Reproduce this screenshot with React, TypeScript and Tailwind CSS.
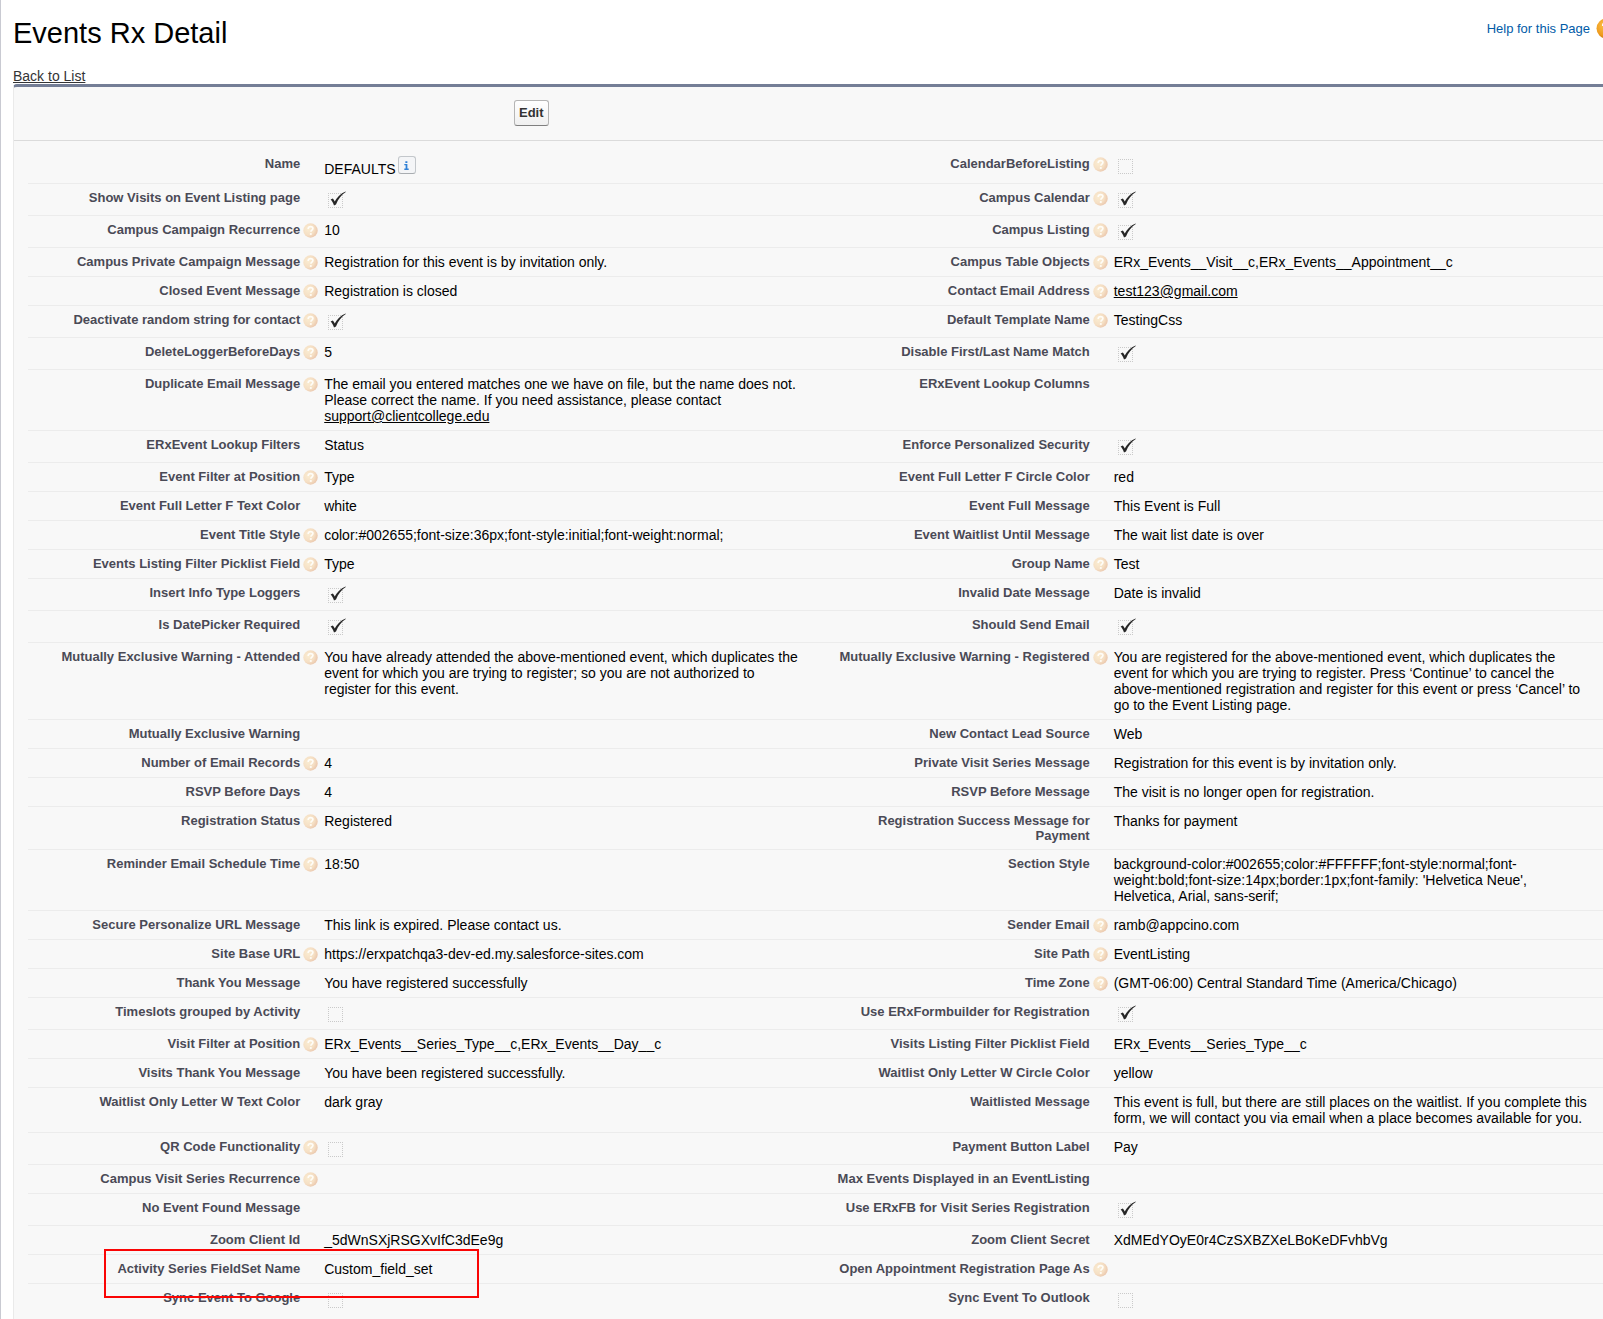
import React from 'react';
import clsx from 'clsx';

interface IField {
  label: string;
  help?: boolean;
  value?: React.ReactNode;
  checked?: boolean;
  marked?: boolean;
}

const linkClass = 'underline underline-offset-1';

const rows: [IField, IField][] = [
  [
    { label: 'Name', value: <NameValue /> },
    { label: 'CalendarBeforeListing', help: true, checked: false },
  ],
  [
    { label: 'Show Visits on Event Listing page', checked: true },
    { label: 'Campus Calendar', help: true, checked: true },
  ],
  [
    { label: 'Campus Campaign Recurrence', help: true, value: '10' },
    { label: 'Campus Listing', help: true, checked: true },
  ],
  [
    { label: 'Campus Private Campaign Message', help: true, value: 'Registration for this event is by invitation only.' },
    { label: 'Campus Table Objects', help: true, value: 'ERx_Events__Visit__c,ERx_Events__Appointment__c' },
  ],
  [
    { label: 'Closed Event Message', help: true, value: 'Registration is closed' },
    {
      label: 'Contact Email Address',
      help: true,
      value: <a href="mailto:test123@gmail.com" className={linkClass}>test123@gmail.com</a>,
    },
  ],
  [
    { label: 'Deactivate random string for contact', help: true, checked: true },
    { label: 'Default Template Name', help: true, value: 'TestingCss' },
  ],
  [
    { label: 'DeleteLoggerBeforeDays', help: true, value: '5' },
    { label: 'Disable First/Last Name Match', checked: true },
  ],
  [
    {
      label: 'Duplicate Email Message',
      help: true,
      value: (
        <>
          The email you entered matches one we have on file, but the name does not. Please correct the name. If you
          need assistance, please contact{' '}
          <a href="mailto:support@clientcollege.edu" className={linkClass}>support@clientcollege.edu</a>
        </>
      ),
    },
    { label: 'ERxEvent Lookup Columns' },
  ],
  [
    { label: 'ERxEvent Lookup Filters', value: 'Status' },
    { label: 'Enforce Personalized Security', checked: true },
  ],
  [
    { label: 'Event Filter at Position', help: true, value: 'Type' },
    { label: 'Event Full Letter F Circle Color', value: 'red' },
  ],
  [
    { label: 'Event Full Letter F Text Color', value: 'white' },
    { label: 'Event Full Message', value: 'This Event is Full' },
  ],
  [
    { label: 'Event Title Style', help: true, value: 'color:#002655;font-size:36px;font-style:initial;font-weight:normal;' },
    { label: 'Event Waitlist Until Message', value: 'The wait list date is over' },
  ],
  [
    { label: 'Events Listing Filter Picklist Field', help: true, value: 'Type' },
    { label: 'Group Name', help: true, value: 'Test' },
  ],
  [
    { label: 'Insert Info Type Loggers', checked: true },
    { label: 'Invalid Date Message', value: 'Date is invalid' },
  ],
  [
    { label: 'Is DatePicker Required', checked: true },
    { label: 'Should Send Email', checked: true },
  ],
  [
    {
      label: 'Mutually Exclusive Warning - Attended',
      help: true,
      value:
        'You have already attended the above-mentioned event, which duplicates the event for which you are trying to register; so you are not authorized to register for this event.',
    },
    {
      label: 'Mutually Exclusive Warning - Registered',
      help: true,
      value:
        'You are registered for the above-mentioned event, which duplicates the event for which you are trying to register. Press ‘Continue’ to cancel the above-mentioned registration and register for this event or press ‘Cancel’ to go to the Event Listing page.',
    },
  ],
  [
    { label: 'Mutually Exclusive Warning' },
    { label: 'New Contact Lead Source', value: 'Web' },
  ],
  [
    { label: 'Number of Email Records', help: true, value: '4' },
    { label: 'Private Visit Series Message', value: 'Registration for this event is by invitation only.' },
  ],
  [
    { label: 'RSVP Before Days', value: '4' },
    { label: 'RSVP Before Message', value: 'The visit is no longer open for registration.' },
  ],
  [
    { label: 'Registration Status', help: true, value: 'Registered' },
    { label: 'Registration Success Message for Payment', value: 'Thanks for payment' },
  ],
  [
    { label: 'Reminder Email Schedule Time', help: true, value: '18:50' },
    {
      label: 'Section Style',
      value:
        "background-color:#002655;color:#FFFFFF;font-style:normal;font-weight:bold;font-size:14px;border:1px;font-family: 'Helvetica Neue', Helvetica, Arial, sans-serif;",
    },
  ],
  [
    { label: 'Secure Personalize URL Message', value: 'This link is expired. Please contact us.' },
    { label: 'Sender Email', help: true, value: 'ramb@appcino.com' },
  ],
  [
    { label: 'Site Base URL', help: true, value: 'https://erxpatchqa3-dev-ed.my.salesforce-sites.com' },
    { label: 'Site Path', help: true, value: 'EventListing' },
  ],
  [
    { label: 'Thank You Message', value: 'You have registered successfully' },
    { label: 'Time Zone', help: true, value: '(GMT-06:00) Central Standard Time (America/Chicago)' },
  ],
  [
    { label: 'Timeslots grouped by Activity', checked: false },
    { label: 'Use ERxFormbuilder for Registration', checked: true },
  ],
  [
    { label: 'Visit Filter at Position', help: true, value: 'ERx_Events__Series_Type__c,ERx_Events__Day__c' },
    { label: 'Visits Listing Filter Picklist Field', value: 'ERx_Events__Series_Type__c' },
  ],
  [
    { label: 'Visits Thank You Message', value: 'You have been registered successfully.' },
    { label: 'Waitlist Only Letter W Circle Color', value: 'yellow' },
  ],
  [
    { label: 'Waitlist Only Letter W Text Color', value: 'dark gray' },
    {
      label: 'Waitlisted Message',
      value:
        'This event is full, but there are still places on the waitlist. If you complete this form, we will contact you via email when a place becomes available for you.',
    },
  ],
  [
    { label: 'QR Code Functionality', help: true, checked: false },
    { label: 'Payment Button Label', value: 'Pay' },
  ],
  [
    { label: 'Campus Visit Series Recurrence', help: true },
    { label: 'Max Events Displayed in an EventListing' },
  ],
  [
    { label: 'No Event Found Message' },
    { label: 'Use ERxFB for Visit Series Registration', checked: true },
  ],
  [
    { label: 'Zoom Client Id', value: '_5dWnSXjRSGXvIfC3dEe9g' },
    { label: 'Zoom Client Secret', value: 'XdMEdYOyE0r4CzSXBZXeLBoKeDFvhbVg' },
  ],
  [
    { label: 'Activity Series FieldSet Name', value: 'Custom_field_set', marked: true },
    { label: 'Open Appointment Registration Page As', help: true },
  ],
  [
    { label: 'Sync Event To Google', checked: false },
    { label: 'Sync Event To Outlook', checked: false },
  ],
];

function NameValue() {
  return (
    <span className="flex h-[21px] items-start">
      <span className="self-end">DEFAULTS</span>
      <button
        type="button"
        aria-label="Info"
        className="ml-[2px] flex size-[18px] items-center justify-center rounded-[3px] border border-[#c3c7cb] border-b-[#a9adb1] bg-[#f4f5f7]"
      >
        <svg viewBox="0 0 8 10" className="h-[9px] w-[7px]" fill="#2f80d6">
          <path d="M2.7 0h2.3v2H2.7zM1.5 3.2H5v5.3h1.5V10h-5V8.500h1.500V4.600H1.500z" />
        </svg>
      </button>
    </span>
  );
}

function HelpIcon() {
  return (
    <svg viewBox="0 0 15 15" className="size-[15px]" aria-hidden="true">
      <defs>
        <radialGradient id="helpFill" cx="0.35" cy="0.4" r="0.7">
          <stop offset="0" stopColor="#faecd2" />
          <stop offset="0.6" stopColor="#f5dfc4" />
          <stop offset="1" stopColor="#e9c4aa" />
        </radialGradient>
      </defs>
      <circle cx="7.500" cy="7.500" r="7.200" fill="url(#helpFill)" />
      <path
        d="M5.200 5.900c0-1.500 1-2.300 2.400-2.300s2.300.8 2.300 2c0 1.500-2 1.500-2 3.100"
        fill="none"
        stroke="#fffdf8"
        strokeWidth="1.700"
      />
      <circle cx="7.800" cy="11" r="1.100" fill="#fffdf8" />
    </svg>
  );
}

function CheckValue({ id, checked }: { id: string; checked: boolean }) {
  return (
    <span className="relative block h-[19px] w-6">
      <input
        id={id}
        type="checkbox"
        checked={checked}
        disabled
        className="absolute top-[3px] left-1 size-[15px] appearance-none border border-dotted border-[#cacaca]"
      />
      {checked && (
        <svg viewBox="0 0 16 16" className="absolute top-px left-[6px] size-4" aria-hidden="true">
          <path
            d="M.6 8.600 2.800 7.400C3.800 8.300 4.300 9.300 4.700 10.400 7 6 10.500 2.500 15.600.4L15.800 1.100C11.500 3.800 8.200 8.200 6 13.500L4 14.500C3.200 12.300 2.200 10.200.6 8.600z"
            fill="#262626"
          />
        </svg>
      )}
    </span>
  );
}

function FieldCells({ field, last }: { field: IField; last: boolean }) {
  const id = field.label.toLowerCase().replace(/\W+/g, '-');
  const isCheck = field.checked !== undefined;
  const border = !last && 'border-b border-[#ececec]';

  return (
    <>
      <th
        scope="row"
        className={clsx('relative py-[6px] pr-3 pl-1 text-right align-top text-[13px] leading-[15px] font-bold text-[#4a4a56]', border)}
      >
        {isCheck ? <label htmlFor={id}>{field.label}</label> : field.label}
        {field.help && (
          <span className="absolute top-[7px] right-[-6px]">
            <HelpIcon />
          </span>
        )}
        {field.marked && (
          <span className="pointer-events-none absolute -top-[6px] left-[76px] z-10 h-[49px] w-[375px] border-2 border-[#fa0505]" />
        )}
      </th>
      <td className={clsx('py-[6px] pr-4 pl-3 align-top text-sm leading-4 text-black', border)}>
        {isCheck ? <CheckValue id={id} checked={!!field.checked} /> : <div className="min-h-4">{field.value}</div>}
      </td>
    </>
  );
}

export default function App() {
  return (
    <div className="min-h-screen overflow-hidden border-l border-[#c9cad2] bg-white font-['Liberation_Sans',Arial,sans-serif]">
      {/* The detail block is a little wider than the window */}
      <div className="-mr-[18px] pl-3">
        <header className="flex items-start justify-between pt-[14px] pr-1">
          <h1 className="text-[29px] leading-[38px] text-black">Events Rx Detail</h1>
          <a href="#help" className="flex items-center gap-[6px] pt-1 text-[13px] leading-[21px] text-[#015ba7]">
            Help for this Page
            <svg viewBox="0 0 21 21" className="size-[21px]" aria-hidden="true">
              <defs>
                <radialGradient id="pageHelp" cx="0.4" cy="0.35" r="0.7">
                  <stop offset="0" stopColor="#fcc14a" />
                  <stop offset="0.7" stopColor="#ee9a1c" />
                  <stop offset="1" stopColor="#c86f10" />
                </radialGradient>
              </defs>
              <circle cx="10.500" cy="10.500" r="10" fill="url(#pageHelp)" />
              <path d="M7 8c0-2 1.500-3.200 3.600-3.200S14 6 14 7.700c0 2.200-3 2.200-3 4.600" fill="none" stroke="#fff" strokeWidth="2.200" />
              <circle cx="11" cy="15.500" r="1.400" fill="#fff" />
            </svg>
          </a>
        </header>

        <div className="pt-4 text-sm leading-4 text-[#333435]">
          <a href="#list" className={linkClass}>Back to List</a>
        </div>

        <main className="rounded-tl border-t-[3px] border-l border-t-[#747e96] border-l-[#eaeaea] bg-[#f8f8f8]">
          <div className="flex border-b border-[#dbdbdb] pt-[13px] pb-[14px]">
            <div className="w-[500px] max-w-[50%]" />
            <button
              type="button"
              className="h-[26px] rounded-[3px] border border-[#b5b5b5] border-b-[#7f7f7f] bg-linear-to-b from-white to-[#f0f0f0] px-1 text-[13px] font-bold text-[#333333]"
            >
              Edit
            </button>
          </div>

          <div className="pt-[9px] pr-[14px] pb-1 pl-[14px]">
            <table className="w-full table-fixed border-separate border-spacing-0">
              <colgroup>
                <col className="w-[18%]" />
                <col className="w-[32%]" />
                <col className="w-[18%]" />
                <col className="w-[32%]" />
              </colgroup>
              <tbody>
                {rows.map(([left, right], index) => (
                  <tr key={left.label}>
                    <FieldCells field={left} last={index === rows.length - 1} />
                    <FieldCells field={right} last={index === rows.length - 1} />
                  </tr>
                ))}
              </tbody>
            </table>
          </div>
        </main>
      </div>
    </div>
  );
}
